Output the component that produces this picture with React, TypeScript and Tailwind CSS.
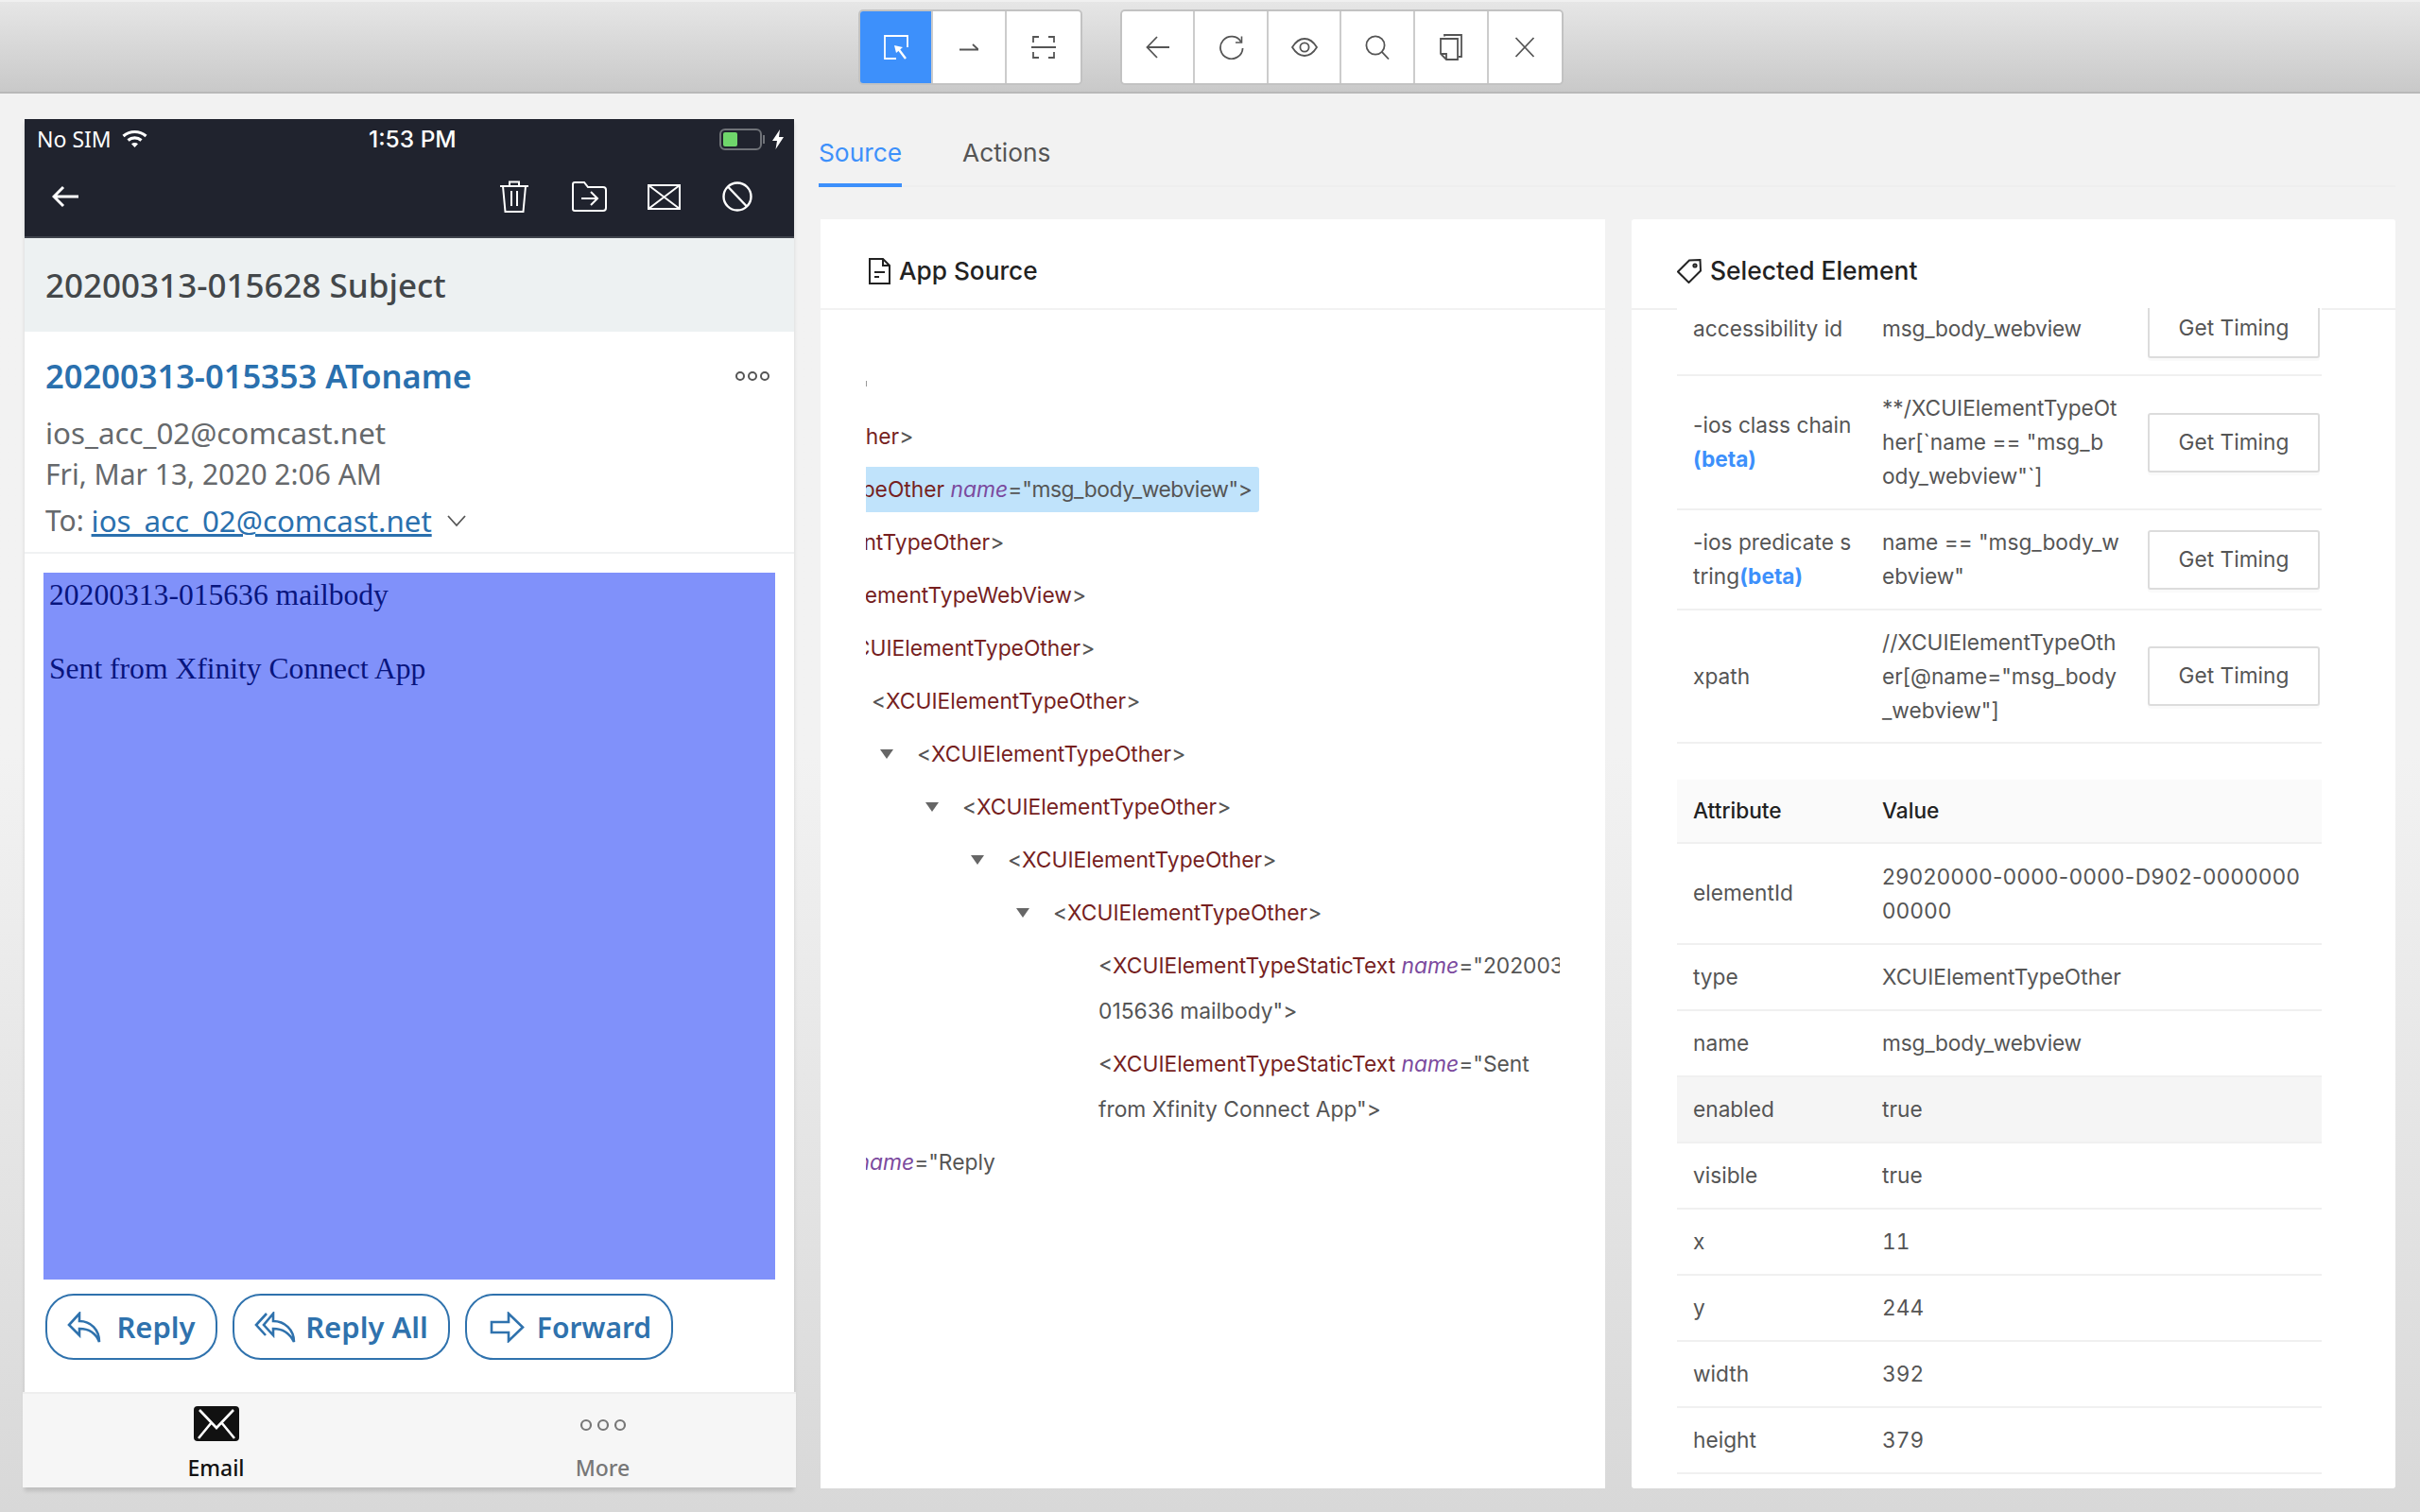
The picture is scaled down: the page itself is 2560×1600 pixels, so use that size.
import type { ReactNode } from "react"

const inter = "font-['Inter',sans-serif]"
const noto = "font-['Noto_Sans',sans-serif]"

function ToolIcon({ w, h, active, children }: { w: number; h: number; active?: boolean; children: ReactNode }) {
  return (
    <svg width={w} height={h} viewBox={`0 0 ${w} ${h}`} fill="none" stroke={active ? "#ffffff" : "#555555"} strokeWidth="1.8">
      {children}
    </svg>
  )
}

function ToolButton({ active, children }: { active?: boolean; children: ReactNode }) {
  return (
    <div className={`w-[77.6px] h-[76px] flex items-center justify-center border-r-2 border-[#cccccc] last:border-r-0 ${active ? "bg-[#3d90fb]" : "bg-white"}`}>
      {children}
    </div>
  )
}

function Toolbar() {
  return (
    <div className="h-[99px] shrink-0 flex justify-center gap-[44px] pt-[10px] pl-[2px] bg-linear-to-b from-[#e6e6e6] to-[#c9c9c9] border-t-2 border-t-[#f0f0f0] border-b-2 border-b-[#b8b8b8]">
      <div className="flex h-[76px] rounded-[3px] overflow-hidden shadow-[0_0_0_2px_#c2c2c2]">
        <ToolButton active>
          <ToolIcon w={26} h={26} active>
            <path d="M13 25H1V1H25V13" />
            <path d="M14 13L23 25" strokeWidth="2.4" />
            <path d="M11 11L20 13L13 19Z" fill="#ffffff" stroke="none" />
          </ToolIcon>
        </ToolButton>
        <ToolButton>
          <ToolIcon w={20} h={8}>
            <path d="M0 6.5H20L14 1" />
          </ToolIcon>
        </ToolButton>
        <ToolButton>
          <ToolIcon w={26} h={24}>
            <path d="M2 7V1H8M18 1H24V7M2 17V23H8M18 23H24V17" />
            <path d="M0 12H26" strokeWidth="2.2" />
          </ToolIcon>
        </ToolButton>
      </div>
      <div className="flex h-[76px] rounded-[3px] overflow-hidden shadow-[0_0_0_2px_#c2c2c2]">
        <ToolButton>
          <ToolIcon w={25} h={24}>
            <path d="M12 1L1.5 12L12 23M1.5 12H25" />
          </ToolIcon>
        </ToolButton>
        <ToolButton>
          <ToolIcon w={27} h={26}>
            <path d="M24 7.5A11.8 11.8 0 1 0 25.6 14" />
            <path d="M24.5 1.5V8H18" strokeWidth="1.6" />
          </ToolIcon>
        </ToolButton>
        <ToolButton>
          <ToolIcon w={28} h={20}>
            <path d="M1 10C5 3.5 9 1 14 1S23 3.5 27 10C23 16.5 19 19 14 19S5 16.5 1 10Z" />
            <circle cx="14" cy="10" r="4.6" />
          </ToolIcon>
        </ToolButton>
        <ToolButton>
          <ToolIcon w={26} h={26}>
            <circle cx="11" cy="11" r="9.6" />
            <path d="M17.8 17.8L25 25.5" />
          </ToolIcon>
        </ToolButton>
        <ToolButton>
          <ToolIcon w={24} h={28}>
            <path d="M5 2.5V1H23V24H20" />
            <path d="M1 21V5H19V27H7Z" />
            <path d="M1 21H7V27" />
          </ToolIcon>
        </ToolButton>
        <ToolButton>
          <ToolIcon w={22} h={22}>
            <path d="M1.5 1L20.5 21M20.5 1L1.5 21" />
          </ToolIcon>
        </ToolButton>
      </div>
    </div>
  )
}

function ActionButton({ label, classes, icon }: { label: string; classes: string; icon: ReactNode }) {
  return (
    <div className={`h-[70px] ${classes} flex items-center justify-center rounded-[30px] border-2 border-[#2f72ad] text-[#2f72ad] font-semibold`}>
      {icon}
      <span>{label}</span>
    </div>
  )
}

function Device() {
  return (
    <div className={`w-[814px] h-[1448px] shrink-0 flex flex-col bg-white shadow-[0_4px_4px_rgba(0,0,0,0.12)] ${noto}`}>
      <div className="h-[126px] shrink-0 bg-[#20232e] border-b-2 border-b-[#3f434c] text-white">
        <div className="h-[42px] flex items-center pl-[13px] text-[23px] whitespace-nowrap">
          <span className="w-[89px]">No SIM</span>
          <svg width="29" height="20" viewBox="0 0 28 20" fill="none" stroke="#ffffff" strokeWidth="3.2">
            <path d="M2 7C9 1 19 1 26 7" />
            <path d="M7 11.5C11 8 17 8 21 11.5" />
            <path d="M14 19L10.5 15.2C12.5 13.6 15.5 13.6 17.5 15.2Z" fill="#ffffff" stroke="none" />
          </svg>
          <span className={`ml-[233px] w-[92px] text-[24.5px] font-medium ${inter}`}>1:53 PM</span>
          <div className="ml-[279px] w-[45px] h-[23px] rounded-[6px] border-2 border-[#6f7278] p-[2px]">
            <div className="w-[15px] h-full bg-[#6fd66b] rounded-[2px]" />
          </div>
          <div className="ml-[1px] w-[2px] h-[9px] bg-[#6f7278]" />
          <svg className="ml-[8px]" width="12" height="21" viewBox="0 0 12 21" fill="#ffffff">
            <path d="M8 0L0 12H5L3.5 21L12 8H7Z" />
          </svg>
        </div>
        <div className="flex items-center h-[60px] mt-[10px]">
          <svg className="ml-[29px]" width="28" height="24" viewBox="0 0 28 24" fill="none" stroke="#ffffff" strokeWidth="3">
            <path d="M12 2L2 12L12 22M2 12H28" />
          </svg>
          <svg className="ml-[445px]" width="32" height="34" viewBox="0 0 32 34" fill="none" stroke="#ffffff" strokeWidth="2">
            <path d="M1 6H31M11 6V1.5H21V6M4 6L6.5 33H25.5L28 6M13 11V27M19 11V27" />
          </svg>
          <svg className="ml-[45px]" width="37" height="32" viewBox="0 0 37 32" fill="none" stroke="#ffffff" strokeWidth="2">
            <path d="M1 3C1 1.8 1.8 1 3 1H13L17 6H33C35 6 36 7 36 9V28C36 30 35 31 33 31H3C1.8 31 1 30 1 29Z" />
            <path d="M10 18H27M20 11L27 18L20 25" />
          </svg>
          <svg className="ml-[43px]" width="35" height="27" viewBox="0 0 35 27" fill="none" stroke="#ffffff" strokeWidth="2">
            <rect x="1" y="1" width="33" height="25" />
            <path d="M1 1L34 26M34 1L1 26" />
          </svg>
          <svg className="ml-[44px]" width="32" height="32" viewBox="0 0 32 32" fill="none" stroke="#ffffff" strokeWidth="2.4">
            <circle cx="16" cy="16" r="14.5" />
            <path d="M6 5.5L26 26.5" />
          </svg>
        </div>
      </div>

      <div className="h-[99px] shrink-0 flex items-center px-[22px] pt-[2px] bg-[#edf1f2] text-[#43474a] text-[35px] font-medium">20200313-015628 Subject</div>

      <div className="h-[235px] shrink-0 px-[22px] border-b-2 border-b-[#f0f2f3] text-[#66696c] text-[30px]">
        <div className="h-[94px] flex items-center justify-between pr-[3px]">
          <span className="text-[#2a70ae] text-[34.5px] font-semibold">20200313-015353 AToname</span>
          <svg width="38" height="12" viewBox="0 0 38 12" fill="none" stroke="#555555" strokeWidth="2">
            <circle cx="6" cy="6" r="4" />
            <circle cx="19" cy="6" r="4" />
            <circle cx="32" cy="6" r="4" />
          </svg>
        </div>
        <div className="leading-[44px] mt-[-9px] text-[31.3px]">ios_acc_02@comcast.net</div>
        <div className="leading-[44px]">Fri, Mar 13, 2020 2:06 AM</div>
        <div className="flex items-center leading-[48px] mt-[3px]">
          <span>To:&nbsp;</span>
          <span className="text-[#2a70ae] underline text-[31.3px]">ios_acc_02@comcast.net</span>
          <svg className="ml-[16px]" width="20" height="14" viewBox="0 0 20 14" fill="none" stroke="#555555" strokeWidth="1.8">
            <path d="M1 2L10 12L19 2" />
          </svg>
        </div>
      </div>

      <div className="mx-[20px] mt-[20px] w-[774px] h-[748px] shrink-0 bg-[#8091fa] pl-[6px] pt-[1px] text-[#08157e] text-[31.6px] leading-[46px] font-['Liberation_Serif',serif]">
        <div>20200313-015636 mailbody</div>
        <div className="mt-[32px]">Sent from Xfinity Connect App</div>
      </div>

      <div className="flex gap-[16px] ml-[22px] mt-[15px]">
        <ActionButton
          label="Reply"
          classes="w-[182px] gap-[16px] text-[31px]"
          icon={
            <svg width="36" height="33" viewBox="0 0 36 33" fill="none" stroke="#2f72ad" strokeWidth="2.6">
              <path d="M13 2L2 14L13 25V18C22 18 30 22 34 32C34 19 25 10 13 10Z" />
            </svg>
          }
        />
        <ActionButton
          label="Reply All"
          classes="w-[230px] gap-[10px] text-[31px]"
          icon={
            <svg width="44" height="33" viewBox="0 0 44 33" fill="none" stroke="#2f72ad" strokeWidth="2.6">
              <path d="M20 2L10 14L20 25V18C29 18 37 22 42 32C42 19 32 10 20 10Z" />
              <path d="M13 2L2 14L12 25" />
            </svg>
          }
        />
        <ActionButton
          label="Forward"
          classes="w-[220px] gap-[13px] pl-[3px] text-[30px]"
          icon={
            <svg width="37" height="33" viewBox="0 0 37 33" fill="none" stroke="#2f72ad" strokeWidth="2.6">
              <path d="M2 11H20V2L35 16.5L20 31V22H2Z" />
            </svg>
          }
        />
      </div>

      <div className="mt-auto mx-[-2px] h-[101px] shrink-0 flex border-t-2 border-t-[#eeeeee] bg-[#f6f6f6] text-[23px] font-medium">
        <div className="w-[409px] flex flex-col items-center pt-[13px] text-[#111111]">
          <svg width="48" height="37" viewBox="0 0 48 37">
            <rect width="48" height="37" rx="4" fill="#111111" />
            <path d="M6 4L24 23L42 4M5 34L19 17M43 34L29 17" stroke="#ffffff" strokeWidth="2.6" fill="none" />
          </svg>
          <span className="mt-[11px]">Email</span>
        </div>
        <div className="w-[409px] flex flex-col items-center pt-[26px] text-[#777777]">
          <svg width="50" height="14" viewBox="0 0 50 14" fill="none" stroke="#777777" strokeWidth="2.2">
            <circle cx="7" cy="7" r="5" />
            <circle cx="25" cy="7" r="5" />
            <circle cx="43" cy="7" r="5" />
          </svg>
          <span className="mt-[21px]">More</span>
        </div>
      </div>
    </div>
  )
}

function Tag({ name, attr, value, rest }: { name: string; attr?: boolean; value?: ReactNode; rest?: string }) {
  return (
    <>
      {"<"}
      <span className="text-[#761f1f]">{name}</span>
      {attr && (
        <>
          {" "}
          <i className="text-[#7b4a9e]">name</i>={value}
        </>
      )}
      {rest}
    </>
  )
}

function TreeRow({ offset, caret, children }: { offset: string; caret?: boolean; children: ReactNode }) {
  return (
    <div className={`flex py-[4px] leading-[48px] whitespace-nowrap ${offset}`}>
      <div className="w-[47px] h-[48px] shrink-0 flex items-center pl-[8px]">
        {caret && (
          <svg width="14" height="10" viewBox="0 0 14 10" fill="#666666">
            <path d="M0 0H14L7 10Z" />
          </svg>
        )}
      </div>
      {children}
    </div>
  )
}

function SourceCard() {
  const other = <Tag name="XCUIElementTypeOther" rest=">" />
  return (
    <div className="w-[830px] h-[1343px] flex flex-col rounded-[3px]">
      <div className="h-[94px] shrink-0 flex items-center pl-[51px] pt-[16px] bg-white text-[#222222] text-[26.2px] font-medium">
        <svg width="23" height="28" viewBox="0 0 23 28" fill="none" stroke="#222222" strokeWidth="2">
          <path d="M1 1H15L22 8V27H1Z" />
          <path d="M15 1V8H22M6 15H17M6 20H11" />
        </svg>
        <span className="ml-[9px]">App Source</span>
      </div>
      <div className="flex-1 mt-[2px] bg-white px-[48px] pt-[50px] text-[#555555] text-[22.8px]">
        <div className="w-[734px] overflow-hidden">
          <div className="h-[56px] flex items-center">
            <div className="w-[1px] h-[6px] bg-[#999999]" />
          </div>
          <TreeRow offset="ml-[-281px]">{other}</TreeRow>
          <TreeRow offset="ml-[-233px]">
            <span className="h-[48px] pr-[8px] bg-[#c0e3fb] rounded-r-[3px]">
              <Tag name="XCUIElementTypeOther" attr value={<span className="tracking-[-0.44px]">"msg_body_webview"&gt;</span>} />
            </span>
          </TreeRow>
          <TreeRow offset="ml-[-185px]">{other}</TreeRow>
          <TreeRow offset="ml-[-137px]">
            <Tag name="XCUIElementTypeWebView" rest=">" />
          </TreeRow>
          <TreeRow offset="ml-[-89px]">{other}</TreeRow>
          <TreeRow offset="ml-[-41px]">{other}</TreeRow>
          <TreeRow offset="ml-[7px]" caret>{other}</TreeRow>
          <TreeRow offset="ml-[55px]" caret>{other}</TreeRow>
          <TreeRow offset="ml-[103px]" caret>{other}</TreeRow>
          <TreeRow offset="ml-[151px]" caret>{other}</TreeRow>
          <TreeRow offset="ml-[199px]">
            <div>
              <Tag name="XCUIElementTypeStaticText" attr value={'"20200313-'} />
              <br />
              015636 mailbody{'">'}
            </div>
          </TreeRow>
          <TreeRow offset="ml-[199px]">
            <div>
              <Tag name="XCUIElementTypeStaticText" attr value={'"Sent'} />
              <br />
              from Xfinity Connect App{'">'}
            </div>
          </TreeRow>
          <TreeRow offset="ml-[-335px]">
            <Tag name="XCUIElementTypeButton" attr value={'"Reply'} />
          </TreeRow>
        </div>
      </div>
    </div>
  )
}

function LocatorRow({ height, label, value }: { height: string; label: ReactNode; value: ReactNode }) {
  return (
    <div className={`${height} flex items-center border-b-2 border-b-[#f0f0f0]`}>
      <div className="w-[217px] shrink-0 pl-[17px] leading-[36px]">{label}</div>
      <div className="w-[281px] shrink-0 leading-[36px] whitespace-nowrap">{value}</div>
      <div className="w-[182px] h-[63px] shrink-0 flex items-center justify-center bg-white border-2 border-[#dcdcdc] rounded-[3px] shadow-[0_3px_0_rgba(0,0,0,0.02)]">Get Timing</div>
    </div>
  )
}

const attributes = [
  ["type", "XCUIElementTypeOther"],
  ["name", "msg_body_webview"],
  ["enabled", "true"],
  ["visible", "true"],
  ["x", "11"],
  ["y", "244"],
  ["width", "392"],
  ["height", "379"],
]

function ElementCard() {
  const beta = <b className="text-[#3d90fb] font-bold">(beta)</b>
  return (
    <div className="w-[808px] h-[1343px] flex flex-col bg-white rounded-[3px] text-[#555555] text-[22.7px]">
      <div className="h-[96px] shrink-0 flex items-center pl-[48px] pt-[16px] border-b-2 border-b-[#f0f0f0] text-[#222222] text-[26.4px] font-medium">
        <svg width="26" height="26" viewBox="0 0 26 26" fill="none" stroke="#222222" strokeWidth="2">
          <path d="M1 13.5L13 1.5L24.5 1L25 12.5L12.5 25Z" />
          <circle cx="19" cy="7" r="1.6" />
        </svg>
        <span className="ml-[9px]">Selected Element</span>
      </div>
      <div className="relative mt-[-2px] ml-[48px] w-[682px] h-[1249px] overflow-hidden bg-white">
        <div className="mt-[-27px]">
          <LocatorRow height="h-[99px]" label="accessibility id" value={<span className="tracking-[-0.2px]">msg_body_webview</span>} />
          <LocatorRow
            height="h-[142px]"
            label={
              <>
                -ios class chain
                <br />
                {beta}
              </>
            }
            value={
              <>
                **/XCUIElementTypeOt
                <br />
                her[`name == "msg_b
                <br />
                ody_webview"`]
              </>
            }
          />
          <LocatorRow
            height="h-[106px]"
            label={
              <>
                -ios predicate s
                <br />
                tring{beta}
              </>
            }
            value={
              <>
                name == "msg_body_w
                <br />
                ebview"
              </>
            }
          />
          <LocatorRow
            height="h-[141px]"
            label="xpath"
            value={
              <>
                //XCUIElementTypeOth
                <br />
                er[@name="msg_body
                <br />
                _webview"]
              </>
            }
          />
        </div>
        <div className="mt-[38px]">
          <div className="h-[68px] flex items-center bg-[#fafafa] border-b-2 border-b-[#f0f0f0] text-[#222222] font-medium">
            <div className="w-[217px] pl-[17px]">Attribute</div>
            <div>Value</div>
          </div>
          <div className="h-[107px] flex items-center border-b-2 border-b-[#f0f0f0]">
            <div className="w-[217px] shrink-0 pl-[17px]">elementId</div>
            <div className="leading-[36px] whitespace-nowrap tracking-[0.45px]">
              29020000-0000-0000-D902-0000000
              <br />
              00000
            </div>
          </div>
          {attributes.map(([key, value]) => (
            <div key={key} className={`h-[70px] flex items-center border-b-2 border-b-[#f0f0f0] ${key === "enabled" ? "bg-[#f5f5f5]" : ""}`}>
              <div className="w-[217px] shrink-0 pl-[17px]">{key}</div>
              <div className={`tabular-nums ${key === "name" ? "tracking-[-0.2px]" : ""}`}>{value}</div>
            </div>
          ))}
        </div>
      </div>
    </div>
  )
}

export default function App() {
  return (
    <div className={`w-[2560px] h-[1600px] flex flex-col overflow-hidden bg-linear-to-b from-[#f2f2f2] from-50% to-[#d8d8d8] ${inter}`}>
      <Toolbar />
      <div className="flex pl-[26px] pt-[27px]">
        <Device />
        <div className="ml-[26px] flex flex-col">
          <div className="h-[72px] w-[1668px] flex gap-[64px] border-b-2 border-b-[#eeeeee] text-[26.3px] text-[#555555]">
            <div className="h-[72px] pt-[16px] border-b-4 border-b-[#3d90fb] text-[#3d90fb]">Source</div>
            <div className="pt-[16px]">Actions</div>
          </div>
          <div className="flex gap-[28px] ml-[2px] mt-[34px]">
            <SourceCard />
            <ElementCard />
          </div>
        </div>
      </div>
    </div>
  )
}
